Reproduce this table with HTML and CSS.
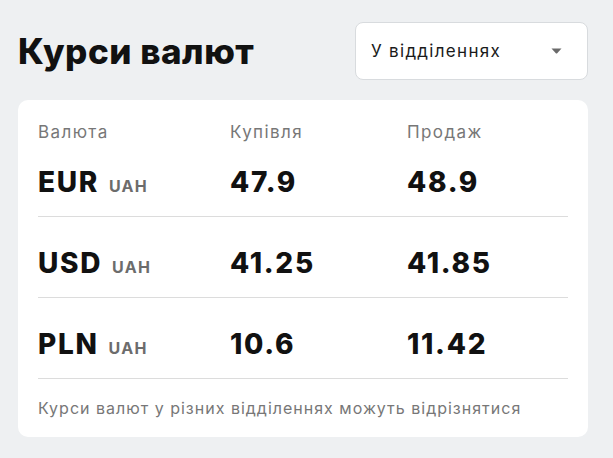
FILE: index.html
```html
<!DOCTYPE html>
<html lang="uk">
<head>
<meta charset="utf-8">
<title>Курси валют</title>
<link rel="stylesheet" href="styles.css">
</head>
<body>
<div class="page">
  <div class="top">
    <h1 class="title">Курси валют</h1>
    <div class="select">
      <span class="select-text">У відділеннях</span>
      <svg class="caret" width="11" height="6" viewBox="0 0 11 6"><path d="M0.5 0.5 H10.5 L6.2 5.2 Q5.5 5.9 4.8 5.2 Z" fill="#6a6a6a"/></svg>
    </div>
  </div>
  <div class="card">
    <div class="grid head">
      <span>Валюта</span>
      <span>Купівля</span>
      <span>Продаж</span>
    </div>
    <div class="grid row row-first">
      <span class="cur">EUR <small class="base">UAH</small></span>
      <span class="val">47.9</span>
      <span class="val">48.9</span>
    </div>
    <div class="grid row">
      <span class="cur">USD <small class="base">UAH</small></span>
      <span class="val">41.25</span>
      <span class="val">41.85</span>
    </div>
    <div class="grid row">
      <span class="cur">PLN <small class="base">UAH</small></span>
      <span class="val">10.6</span>
      <span class="val">11.42</span>
    </div>
    <p class="note">Курси валют у різних відділеннях можуть відрізнятися</p>
  </div>
</div>
</body>
</html>
```
FILE: styles.css
```css
html, body {
  margin: 0;
  padding: 0;
  background: #eef0f2;
}
body {
  font-family: Inter, "Noto Sans", sans-serif;
  color: #111;
}
.page {
  padding: 22px 25px 0 18px;
}
.top {
  display: flex;
  justify-content: space-between;
  align-items: center;
  height: 58px;
}
.title {
  margin: 0;
  font-size: 35px;
  font-weight: 800;
  letter-spacing: 0.5px;
  line-height: 40px;
}
.select {
  box-sizing: border-box;
  width: 233px;
  height: 58px;
  background: #fff;
  border: 1px solid #d8dbde;
  border-radius: 8px;
  display: flex;
  align-items: center;
  justify-content: space-between;
  padding: 0 25px 0 15px;
}
.select-text {
  font-size: 17px;
  letter-spacing: 1.3px;
  color: #1a1a1a;
}
.caret {
  display: block;
}
.card {
  margin-top: 20px;
  background: #fff;
  border-radius: 10px;
  padding: 20px 20px 17px;
}
.grid {
  display: grid;
  grid-template-columns: 192px 177px 1fr;
}
.head {
  font-size: 17px;
  line-height: 24px;
  letter-spacing: 1.4px;
  color: #777;
}
.row {
  padding: 29px 0 17px;
  border-bottom: 1px solid #dcdcdc;
  line-height: 34px;
  height: 34px;
}
.row-first {
  padding-top: 21px;
}
.cur, .val {
  font-size: 28px;
  font-weight: 800;
  letter-spacing: 1.7px;
  line-height: 34px;
}
.base {
  font-size: 16px;
  font-weight: 700;
  color: #6c6c6c;
  margin-left: 2px;
  letter-spacing: 1.3px;
  line-height: 0;
}
.note {
  margin: 17px 0 0;
  font-size: 16px;
  line-height: 24px;
  color: #777;
  letter-spacing: 1px;
}
```
